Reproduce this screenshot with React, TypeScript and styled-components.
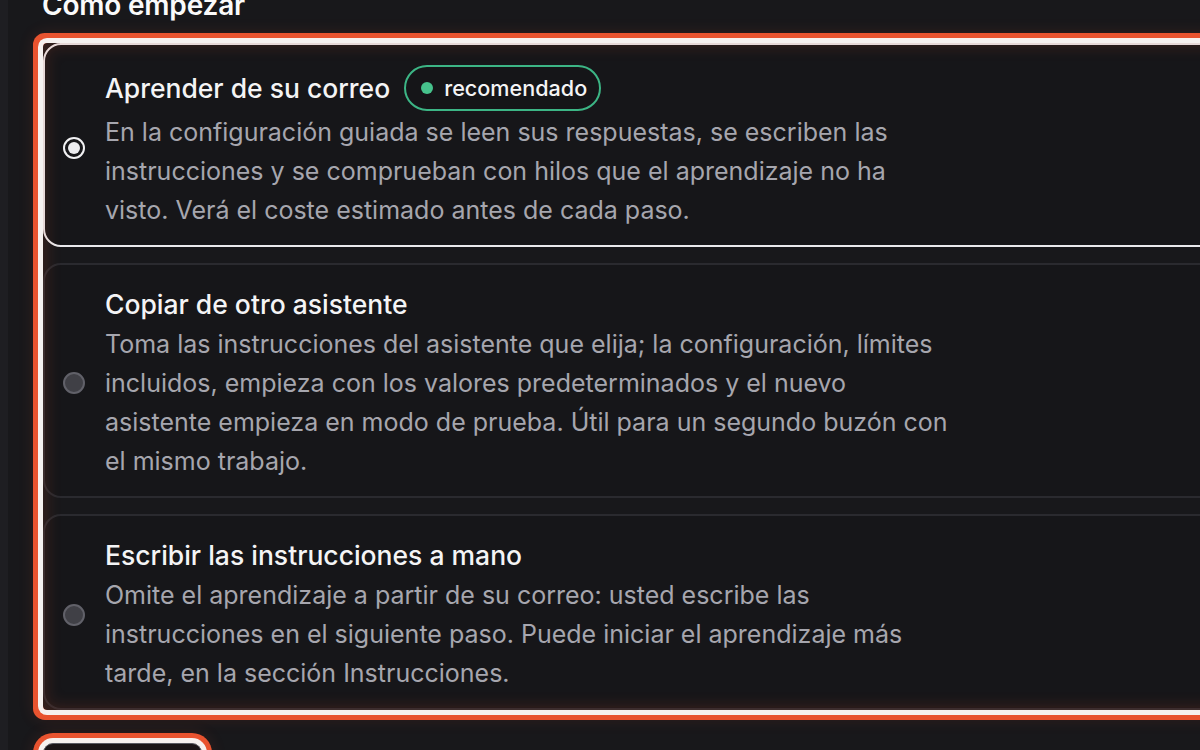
import React, { useState } from "react";
import styled, { createGlobalStyle } from "styled-components";

const GlobalStyle = createGlobalStyle`
  html, body {
    margin: 0;
    padding: 0;
    background: #18181b;
    overflow: hidden;
  }
  body {
    font-family: Inter, "Noto Sans", "Liberation Sans", sans-serif;
    color: #f4f4f5;
    -webkit-font-smoothing: antialiased;
  }
`;

const Shell = styled.div`
  display: flex;
  min-height: 100vh;
`;

const EdgeStrip = styled.div`
  width: 8px;
  flex-shrink: 0;
  background: #1e1e22;
`;

const Main = styled.main`
  flex: 1;
  padding-left: 35px;
`;

const SectionTitle = styled.h2`
  margin: -12px 0 21px -1px;
  font-size: 28px;
  line-height: 34px;
  font-weight: 600;
  color: #fafafa;
  letter-spacing: -0.2px;
`;

// focus ring: white inner band, orange outer band, soft glow
const ringShadow = `
  0 0 0 5px #f6f1ef,
  0 0 0 10px #e8532f,
  0 0 16px 10px rgba(232, 83, 47, 0.12)
`;

const OptionGroup = styled.div`
  position: relative;
  width: 1300px;
  display: flex;
  flex-direction: column;
  gap: 16px;
  border-radius: 4px;
  box-shadow: ${ringShadow};

  &::after {
    content: "";
    position: absolute;
    inset: 0;
    border-radius: 4px;
    pointer-events: none;
    box-shadow: inset 0 0 16px 3px rgba(232, 83, 47, 0.18);
  }
`;

const OptionCard = styled.label<{ $selected: boolean }>`
  display: flex;
  align-items: center;
  gap: 20px;
  padding: 20px 18px 15px;
  border-radius: 18px;
  border: 2px solid ${(p) => (p.$selected ? "#e9e9ec" : "#2a2a2f")};
  background: #161619;
  cursor: pointer;
`;

const Radio = styled.span<{ $checked: boolean }>`
  flex-shrink: 0;
  box-sizing: border-box;
  width: 22px;
  height: 22px;
  border-radius: 50%;
  display: flex;
  align-items: center;
  justify-content: center;
  border: ${(p) => (p.$checked ? "2px solid #f1f1f3" : "2px solid #616169")};
  background: ${(p) => (p.$checked ? "#17171a" : "#404046")};

  &::before {
    content: "";
    width: 12px;
    height: 12px;
    border-radius: 50%;
    background: #ececef;
    display: ${(p) => (p.$checked ? "block" : "none")};
  }
`;

const OptionBody = styled.div`
  display: flex;
  flex-direction: column;
  gap: 2px;
`;

const TitleRow = styled.div`
  display: flex;
  align-items: center;
  gap: 14px;
`;

const OptionTitle = styled.span`
  font-size: 26.5px;
  line-height: 38px;
  font-weight: 450;
  color: #f4f4f5;
`;

const Badge = styled.span`
  box-sizing: border-box;
  height: 46px;
  display: inline-flex;
  align-items: center;
  gap: 11px;
  padding: 0 12px 0 15px;
  border-radius: 999px;
  border: 2px solid #3cb585;
  background: #151518;
  font-size: 21.6px;
  font-weight: 450;
  color: #f4f4f5;

  &::before {
    content: "";
    width: 12px;
    height: 12px;
    border-radius: 50%;
    background: #46c28c;
  }
`;

const OptionText = styled.p`
  margin: 0;
  max-width: 848px;
  font-size: 25px;
  line-height: 39px;
  color: #a6a6ae;
`;

const NextButton = styled.button`
  margin-top: 33px;
  width: 159px;
  height: 56px;
  border-radius: 10px;
  border: 1px solid #5a5a62;
  background: #1b1517;
  box-shadow: ${ringShadow};
`;

const options = [
  {
    id: "learn",
    title: "Aprender de su correo",
    badge: "recomendado",
    text: "En la configuración guiada se leen sus respuestas, se escriben las instrucciones y se comprueban con hilos que el aprendizaje no ha visto. Verá el coste estimado antes de cada paso.",
  },
  {
    id: "copy",
    title: "Copiar de otro asistente",
    text: "Toma las instrucciones del asistente que elija; la configuración, límites incluidos, empieza con los valores predeterminados y el nuevo asistente empieza en modo de prueba. Útil para un segundo buzón con el mismo trabajo.",
  },
  {
    id: "manual",
    title: "Escribir las instrucciones a mano",
    text: "Omite el aprendizaje a partir de su correo: usted escribe las instrucciones en el siguiente paso. Puede iniciar el aprendizaje más tarde, en la sección Instrucciones.",
  },
];

export default function App() {
  const [choice, setChoice] = useState("learn");

  return (
    <Shell>
      <GlobalStyle />
      <EdgeStrip />
      <Main>
        <SectionTitle>Cómo empezar</SectionTitle>
        <OptionGroup role="radiogroup">
          {options.map((o) => (
            <OptionCard
              key={o.id}
              $selected={choice === o.id}
              onClick={() => setChoice(o.id)}
            >
              <Radio $checked={choice === o.id} role="radio" />
              <OptionBody>
                <TitleRow>
                  <OptionTitle>{o.title}</OptionTitle>
                  {o.badge && <Badge>{o.badge}</Badge>}
                </TitleRow>
                <OptionText>{o.text}</OptionText>
              </OptionBody>
            </OptionCard>
          ))}
        </OptionGroup>
        <NextButton type="button" />
      </Main>
    </Shell>
  );
}
